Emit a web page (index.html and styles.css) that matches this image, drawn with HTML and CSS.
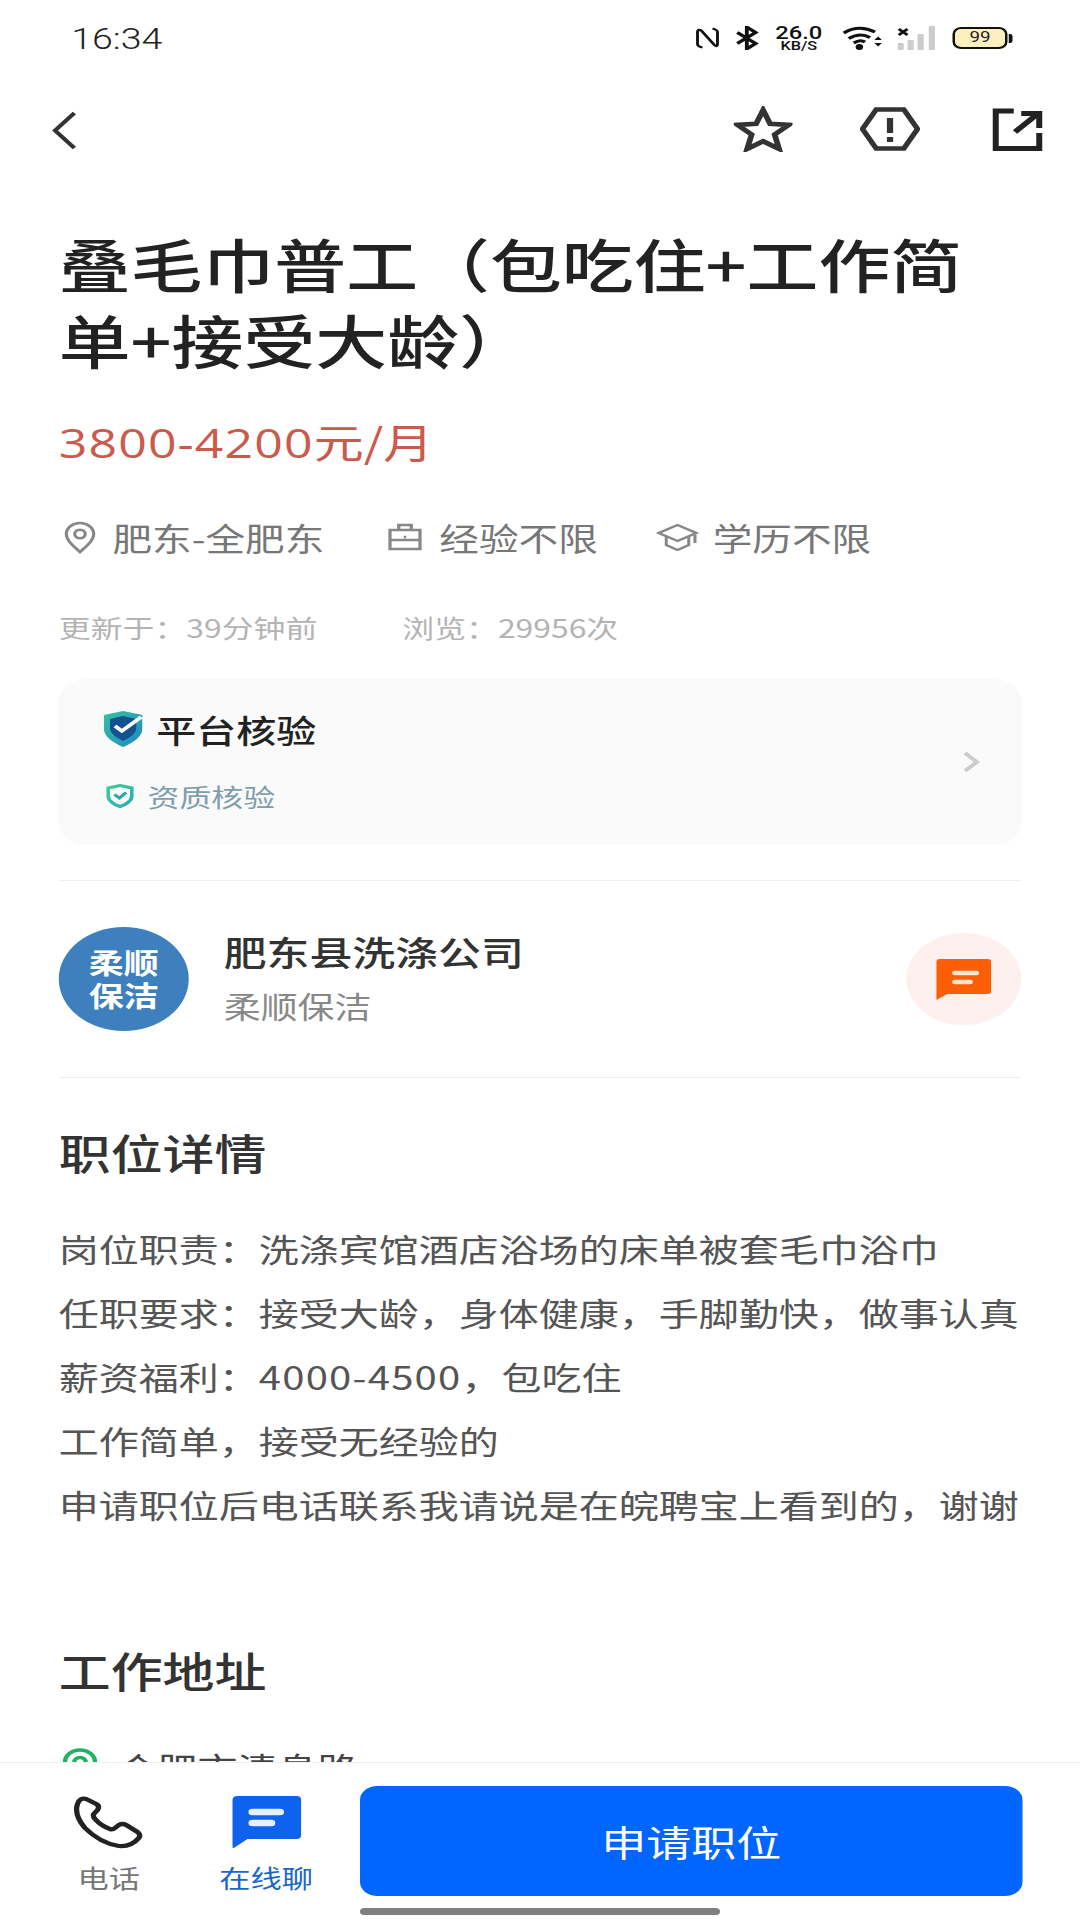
FILE: index.html
```html
<!DOCTYPE html>
<html lang="zh-CN">
<head>
  <meta charset="UTF-8" />
  <meta name="viewport" content="width=device-width, initial-scale=1.0" />
  <title>职位详情</title>
  <link rel="stylesheet" href="styles.css">
</head>
<body>
  <div class="screen">
    <div class="status-bar">
      <span class="time">16:34</span>
      <div class="status-icons">
        <svg class="st-nfc" viewBox="0 0 20 22" width="20" height="22"><path d="M6 20.500Q2 19.500 2 17V5Q2 2 5 3.500L15.500 18Q18 20.500 18 17V5Q18 3 14 1.500" fill="none" stroke="#111" stroke-width="2.300"/></svg>
        <svg class="st-bt" viewBox="0 0 18 22" width="20" height="24"><path d="M1.500 6 15 16 8.500 21V1L15 6 1.500 16" fill="none" stroke="#111" stroke-width="2.800"/></svg>
        <div class="speed"><span>26.0</span><span class="speed-unit">KB/S</span></div>
        <svg class="st-wifi" viewBox="0 0 32 24" width="32" height="24">
          <path d="M1 7Q13-2 26 6M5 12.500Q14 6 22 11.500M9 17Q14 13 18 16" fill="none" stroke="#111" stroke-width="3"/>
          <circle cx="13.500" cy="21" r="3" fill="#111"/>
          <path d="M25.500 14 28.500 10.500 31.500 14ZM25.500 17 28.500 20.500 31.500 17Z" fill="#111"/>
        </svg>
        <svg class="st-signal" viewBox="0 0 30 24" width="30" height="24">
          <path d="M1 3 8 9M8 3 1 9" stroke="#111" stroke-width="2.500"/>
          <rect x="0" y="17" width="5" height="7" rx="1" fill="#ccc"/>
          <rect x="8" y="14" width="5" height="10" rx="1" fill="#ccc"/>
          <rect x="16" y="8" width="5" height="16" rx="1" fill="#ccc"/>
          <rect x="25" y="0" width="5" height="24" rx="1" fill="#ccc"/>
        </svg>
        <div class="battery"><span class="battery-body">99</span><span class="battery-cap"></span></div>
      </div>
    </div>

    <div class="toolbar">
      <svg viewBox="0 0 21 39" width="21" height="39"><path d="M18.500 2 3 19.500 18.500 37" fill="none" stroke="#333" stroke-width="3.500"/></svg>
      <div class="toolbar-actions">
        <svg viewBox="0 0 46 45" width="47" height="46"><path d="M23 4 28.500 17.500 43 18.500 32 28 35.500 42 23 34.500 10.500 42 14 28 3 18.500 17.500 17.500Z" fill="none" stroke="#333" stroke-width="4.500" stroke-linejoin="miter"/></svg>
        <svg viewBox="0 0 48 44" width="48" height="44"><path d="M13 2.500H35L46 22 35 41.500H13L2 22Z" fill="none" stroke="#333" stroke-width="4.500"/><path d="M24 11V26" stroke="#333" stroke-width="5"/><path d="M24 30V35" stroke="#333" stroke-width="5"/></svg>
        <svg class="share" viewBox="0 0 40 43" width="40" height="43"><path d="M17 3H2.500V40.500H37.500V25" fill="none" stroke="#222" stroke-width="5"/><path d="M18 24 36 6" stroke="#222" stroke-width="5"/><path d="M23 3H40V20H35V8H23Z" fill="#222"/></svg>
      </div>
    </div>

    <div class="content">
      <h1 class="job-title">叠毛巾普工（包吃住+工作简<br>单+接受大龄）</h1>
      <div class="salary">3800-4200<span class="salary-unit">元/月</span></div>

      <div class="tags">
        <div class="tag">
          <svg viewBox="0 0 26 33" width="26" height="33"><path d="M13 31C8 25 2 20 2 13A11 11 0 0 1 24 13C24 20 18 25 13 31Z" fill="none" stroke="#888" stroke-width="2.600"/><circle cx="13" cy="13" r="4.200" fill="none" stroke="#888" stroke-width="2.600"/></svg>
          <span>肥东-全肥东</span>
        </div>
        <div class="tag">
          <svg viewBox="0 0 28 28" width="28" height="28"><path d="M9 7V2H19V7M2 7H26V26H2ZM2 17H26" fill="none" stroke="#888" stroke-width="2.600"/><path d="M13 14H15" stroke="#888" stroke-width="2.600"/></svg>
          <span>经验不限</span>
        </div>
        <div class="tag tag-edu">
          <svg viewBox="0 0 34 28" width="34" height="28"><path d="M17 2 32 10 17 18 2 10Z" fill="none" stroke="#888" stroke-width="2.400"/><path d="M8 14V22L17 27 26 22V14" fill="none" stroke="#888" stroke-width="2.400"/><path d="M31 12V20" stroke="#888" stroke-width="2.400"/></svg>
          <span>学历不限</span>
        </div>
      </div>

      <div class="meta">
        <span class="meta-item">更新于：39分钟前</span>
        <span class="meta-item">浏览：29956次</span>
      </div>

      <div class="verify-card">
        <div>
          <div class="verify-title">
            <svg viewBox="0 0 31 36" width="31" height="36">
              <defs><linearGradient id="shieldA" x1="0" y1="0" x2="1" y2="1"><stop offset="0" stop-color="#35c39b"/><stop offset="1" stop-color="#1b88c9"/></linearGradient></defs>
              <path d="M15.500 0 31 4V17C31 26 23 32 15.500 36 8 32 0 26 0 17V4Z" fill="url(#shieldA)"/>
              <path d="M15.500 5 26 8V17C26 23 20 27 15.500 30 11 27 5 23 5 17V8Z" fill="#15508f"/>
              <path d="M9 15 14.500 20 30 6" fill="none" stroke="#fff" stroke-width="3.500"/>
            </svg>
            <span>平台核验</span>
          </div>
          <div class="verify-sub">
            <svg viewBox="0 0 22 24" width="22" height="24">
              <defs><linearGradient id="shieldB" x1="0" y1="0" x2="1" y2="1"><stop offset="0" stop-color="#3fcf95"/><stop offset="1" stop-color="#25a9c0"/></linearGradient></defs>
              <path d="M11 1.500 20.500 4V12C20.500 17 15 21 11 22.500 7 21 1.500 17 1.500 12V4Z" fill="none" stroke="url(#shieldB)" stroke-width="3"/>
              <path d="M6.500 10.500 10.500 14 16 8.500" fill="none" stroke="#2aa9a8" stroke-width="2.800"/>
            </svg>
            <span>资质核验</span>
          </div>
        </div>
        <svg class="chevron" viewBox="0 0 14 22" width="14" height="22"><path d="M2 2 11.500 11 2 20" fill="none" stroke="#ccc" stroke-width="3.500"/></svg>
      </div>

      <div class="company">
        <div class="logo">柔顺<br>保洁</div>
        <div class="company-info">
          <div class="company-name">肥东县洗涤公司</div>
          <div class="company-sub">柔顺保洁</div>
        </div>
        <div class="chat-btn">
          <svg viewBox="0 0 44 41" width="44" height="41"><path d="M3 0H41Q44 0 44 3V32Q44 35 41 35H9L0 41V3Q0 0 3 0Z" fill="#fb5e05"/><path d="M15 14H32" stroke="#fde3d0" stroke-width="4.500" stroke-linecap="round"/><path d="M15 23H27" stroke="#fde3d0" stroke-width="4.500" stroke-linecap="round"/></svg>
        </div>
      </div>

      <h2 class="section-title first">职位详情</h2>
      <div class="description">
        <p>岗位职责：洗涤宾馆酒店浴场的床单被套毛巾浴巾</p>
        <p>任职要求：接受大龄，身体健康，手脚勤快，做事认真</p>
        <p>薪资福利：<span class="num">4000-4500</span>，包吃住</p>
        <p>工作简单，接受无经验的</p>
        <p>申请职位后电话联系我请说是在皖聘宝上看到的，谢谢</p>
      </div>

      <h2 class="section-title second">工作地址</h2>
      <div class="address">
        <svg viewBox="0 0 28 34" width="28" height="34"><path d="M14 33C8 27 2 21 2 14A12 12 0 0 1 26 14C26 21 20 27 14 33Z" fill="none" stroke="#22b163" stroke-width="3.500"/><circle cx="14" cy="14" r="4.500" fill="none" stroke="#22b163" stroke-width="3.500"/></svg>
        <span>合肥市清息路</span>
      </div>
    </div>

    <div class="bottom-bar">
      <div class="bottom-row">
        <div class="tab">
          <svg viewBox="0 0 56 53" width="56" height="53"><path d="M10 3 18 8Q21 10 19 14L16 18Q15 20 17 23 22 30 29 33 31 34 33 32L36 29Q39 27 42 29L51 36Q54 39 52 42 46 51 36 50 21 47 9 32 0 19 3 8 5 1 10 3Z" fill="none" stroke="#222" stroke-width="4.200" stroke-linejoin="round"/></svg>
          <span>电话</span>
        </div>
        <div class="tab active">
          <svg viewBox="0 0 56 53" width="56" height="53"><path d="M5 0H52Q56 0 56 4V39Q56 43 52 43H13L2 52Q1 53 1 50V4Q1 0 5 0Z" fill="#0f62ee"/><path d="M17 16H39" stroke="#e6efff" stroke-width="6.500" stroke-linecap="round"/><path d="M17 27H32" stroke="#e6efff" stroke-width="6.500" stroke-linecap="round"/></svg>
          <span>在线聊</span>
        </div>
        <button class="apply-btn">申请职位</button>
      </div>
      <div class="home-indicator"></div>
    </div>
  </div>
</body>
</html>
```

FILE: styles.css
```css
html, body {
  margin: 0;
  padding: 0;
  width: 1080px;
  height: 1920px;
  overflow: hidden;
  background: white;
  font-family: "Noto Sans CJK SC", "Noto Sans", sans-serif;
}

/* the shot is stretched sideways, so lay out at 864 wide and scale up */
.screen {
  position: relative;
  width: 864px;
  height: 1920px;
  overflow: hidden;
  background: white;
  transform: scaleX(1.25);
  transform-origin: 0 0;
}

.status-bar {
  height: 76px;
  display: flex;
  align-items: center;
  justify-content: space-between;
  padding: 0 54px 0 57px;
}

.time {
  margin-top: 1px;
  font-family: Roboto, sans-serif;
  font-size: 30px;
  font-weight: 300;
  color: #222;
}

.status-icons {
  display: flex;
  align-items: center;
}

.st-bt { margin-left: 12px; }
.st-wifi { margin-left: 15px; }
.st-signal { margin-left: 12px; }

.speed {
  display: flex;
  flex-direction: column;
  align-items: center;
  margin-left: 11px;
  width: 40px;
  font-family: Roboto, sans-serif;
  font-weight: 500;
  font-size: 19px;
  line-height: 15px;
  color: #111;
}

.speed-unit {
  font-size: 13px;
  line-height: 12px;
}

.battery {
  display: flex;
  align-items: center;
  margin-left: 14px;
}

.battery-body {
  width: 44px;
  height: 22px;
  box-sizing: border-box;
  border: 2.5px solid #111;
  border-radius: 7px;
  background: #fdf0bf;
  font-family: Roboto, sans-serif;
  font-size: 15px;
  line-height: 17px;
  text-align: center;
  color: #222;
}

.battery-cap {
  width: 3px;
  height: 9px;
  margin-left: 1px;
  background: #111;
  border-radius: 0 2px 2px 0;
}

.toolbar {
  height: 108px;
  display: flex;
  align-items: center;
  justify-content: space-between;
  padding: 0 30px 0 41px;
}

.toolbar-actions {
  display: flex;
  align-items: center;
  gap: 54px;
  margin-top: -2px;
}

.share {
  margin-left: 4px;
}

.content {
  padding: 0 47px;
}

.job-title {
  margin: 41px 0 0;
  font-size: 57.5px;
  font-weight: 500;
  line-height: 76px;
  color: #222;
  white-space: nowrap;
}

.salary {
  height: 50px;
  margin-top: 39px;
  font-family: "Open Sans", "Noto Sans CJK SC", sans-serif;
  font-size: 40px;
  letter-spacing: 0.9px;
  line-height: 50px;
  color: #cb5a4c;
}

.salary-unit {
  font-family: "Noto Sans CJK SC", sans-serif;
  letter-spacing: 0;
}

.tags {
  display: flex;
  align-items: center;
  gap: 51px;
  margin-top: 51px;
  height: 40px;
  padding-left: 4px;
}

.tag {
  display: flex;
  align-items: center;
  gap: 13px;
  font-size: 31.7px;
  line-height: 40px;
  color: #777;
}

.tag-edu {
  gap: 11px;
  margin-left: -4px;
}

.meta {
  display: flex;
  gap: 68px;
  margin-top: 54px;
  font-size: 25.5px;
  line-height: 32px;
  color: #b4b4b4;
}

.verify-card {
  display: flex;
  justify-content: space-between;
  align-items: flex-start;
  box-sizing: border-box;
  height: 166px;
  margin-top: 36px;
  padding: 30px 33px 0 36px;
  background: #fafafa;
  border-radius: 22px;
}

.verify-title {
  display: flex;
  align-items: center;
  gap: 11px;
  font-size: 32px;
  font-weight: 500;
  line-height: 40px;
  color: #222;
}

.verify-sub {
  display: flex;
  align-items: center;
  gap: 11px;
  margin-top: 27px;
  margin-left: 2px;
  font-size: 25.5px;
  line-height: 40px;
  color: #7e9eac;
}

.chevron {
  margin-top: 42px;
}

.company {
  display: flex;
  align-items: center;
  height: 198px;
  margin-top: 35px;
  border-top: 1px solid #f0f0f0;
  border-bottom: 1px solid #f0f0f0;
  box-sizing: border-box;
}

.logo {
  width: 104px;
  height: 104px;
  flex-shrink: 0;
  display: flex;
  align-items: center;
  justify-content: center;
  text-align: center;
  border-radius: 50%;
  background: #3d80bd;
  color: white;
  font-size: 28px;
  font-weight: 700;
  line-height: 33px;
}

.company-info {
  flex: 1;
  margin-left: 28px;
  margin-top: -3px;
}

.company-name {
  font-size: 34.3px;
  font-weight: 500;
  line-height: 44px;
  color: #333;
}

.company-sub {
  margin-top: 10px;
  font-size: 29.5px;
  line-height: 44px;
  color: #888;
}

.chat-btn {
  width: 92px;
  height: 92px;
  display: flex;
  align-items: center;
  justify-content: center;
  border-radius: 50%;
  background: #fdf0ee;
}

.section-title {
  margin: 0;
  font-size: 41.5px;
  font-weight: 500;
  line-height: 44px;
  color: #333;
}

.section-title.first { margin-top: 52px; }
.section-title.second { margin-top: 112px; }

.description {
  margin-top: 42px;
  font-size: 32px;
  line-height: 64px;
  color: #555;
  white-space: nowrap;
}

.description p {
  margin: 0;
}

.num {
  letter-spacing: 1px;
}

.address {
  display: flex;
  align-items: flex-start;
  gap: 16px;
  margin-top: 53px;
  padding-left: 3px;
  font-size: 32px;
  line-height: 44px;
  color: #444;
}

.address svg {
  margin-top: 3px;
}

.bottom-bar {
  position: absolute;
  left: 0;
  right: 0;
  top: 1762px;
  height: 158px;
  box-sizing: border-box;
  border-top: 1px solid #f0f0f0;
  background: white;
}

.bottom-row {
  display: flex;
  align-items: flex-start;
  padding: 23px 46px 0 24px;
}

.tab {
  width: 126px;
  padding-top: 10px;
  display: flex;
  flex-direction: column;
  align-items: center;
  gap: 12px;
  font-size: 25px;
  line-height: 32px;
  color: #777;
}

.tab.active {
  color: #1a66c9;
}

.apply-btn {
  flex: 1;
  height: 110px;
  margin-left: 12px;
  border: none;
  border-radius: 14px;
  background: #0066ff;
  color: white;
  font-family: inherit;
  font-size: 36px;
}

.home-indicator {
  width: 288px;
  height: 7px;
  margin: 12px 0 0 288px;
  border-radius: 4px;
  background: #808080;
}
```
